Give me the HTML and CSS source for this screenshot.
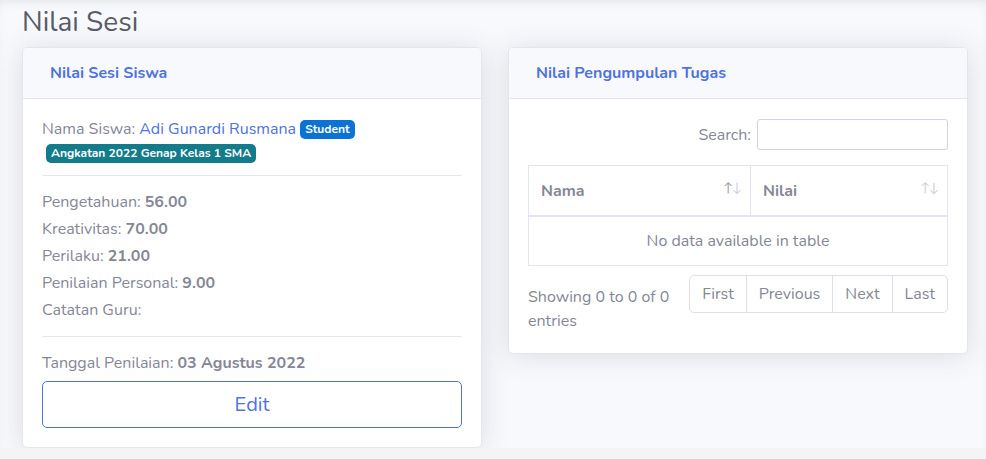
FILE: index.html
```html
<!DOCTYPE html>
<html>
<head>
<meta charset="utf-8">
<link rel="stylesheet" href="styles.css">
</head>
<body>
<div class="page">
  <h1 class="page-title">Nilai Sesi</h1>
  <div class="grid">
    <div class="card">
      <div class="card-header">Nilai Sesi Siswa</div>
      <div class="card-body">
        <div class="student">Nama Siswa: <span class="link">Adi Gunardi Rusmana</span> <span class="badge badge-blue">Student</span> <span class="badge badge-teal">Angkatan 2022 Genap Kelas 1 SMA</span></div>
        <hr class="divider divider-top">
        <div class="scores">
          <div>Pengetahuan: <b>56.00</b></div>
          <div>Kreativitas: <b>70.00</b></div>
          <div>Perilaku: <b>21.00</b></div>
          <div>Penilaian Personal: <b>9.00</b></div>
          <div>Catatan Guru:</div>
        </div>
        <hr class="divider divider-bottom">
        <div class="date">Tanggal Penilaian: <b>03 Agustus 2022</b></div>
        <button class="btn-edit">Edit</button>
      </div>
    </div>
    <div class="card card-short">
      <div class="card-header">Nilai Pengumpulan Tugas</div>
      <div class="card-body">
        <div class="search-row"><label>Search:</label><input class="search-input" type="search"></div>
        <table class="table">
          <thead>
            <tr><th class="col-name"><span>Nama</span><span class="sort"><span class="up">↑</span><span class="down">↓</span></span></th><th><span>Nilai</span><span class="sort dim"><span class="up">↑</span><span class="down">↓</span></span></th></tr>
          </thead>
          <tbody>
            <tr><td colspan="2" class="empty">No data available in table</td></tr>
          </tbody>
        </table>
        <div class="footer-row">
          <div class="info">Showing 0 to 0 of 0 entries</div>
          <div class="pagination">
            <span class="page-link">First</span>
            <span class="page-link">Previous</span>
            <span class="page-link">Next</span>
            <span class="page-link">Last</span>
          </div>
        </div>
      </div>
    </div>
  </div>
</div>
<div class="bottom-strip"></div>
</body>
</html>
```

FILE: styles.css
```css
html, body {
  margin: 0;
  padding: 0;
}
body {
  background: #f4f4f6;
  font-family: "Nunito", "Lato", "Open Sans", sans-serif;
  font-size: 16px;
  line-height: 24px;
  color: #858796;
}
.page {
  height: 448px;
  overflow: hidden;
  background: #f8f9fc;
  box-shadow: inset 0 6px 14px -8px rgba(58, 59, 69, 0.18);
  padding: 0 18px 0 22px;
  box-sizing: border-box;
}
.page-title {
  margin: 0;
  padding-top: 5px;
  height: 47px;
  box-sizing: border-box;
  font-size: 28px;
  line-height: 34px;
  font-weight: 400;
  color: #5a5c69;
}
.grid {
  display: flex;
  gap: 26px;
  align-items: flex-start;
}
.card {
  width: 460px;
  box-sizing: border-box;
  background: #fff;
  border: 1px solid #e3e6f0;
  border-radius: 5px;
  box-shadow: 0 2px 28px 0 rgba(58, 59, 69, 0.15);
  overflow: hidden;
}
.card-header {
  background: #f8f9fc;
  border-bottom: 1px solid #e3e6f0;
  height: 51px;
  box-sizing: border-box;
  padding: 13px 27px;
  font-weight: 700;
  color: #4e73df;
}
.card-body {
  padding: 18px 19px 19px 19px;
}
.link {
  color: #4e73df;
}
.badge {
  display: inline-block;
  font-size: 12px;
  font-weight: 700;
  line-height: 1;
  padding: 3px 5px 4px;
  border-radius: 5px;
  color: #fff;
  vertical-align: 1px;
}
.badge-blue {
  background: #0b72d6;
}
.badge-teal {
  background: #137b8a;
  margin-left: 4px;
}
.divider {
  border: 0;
  border-top: 1px solid #e3e6f0;
}
.divider-top {
  margin: 10px 0 14px 0;
}
.divider-bottom {
  margin: 14px 0 14px 0;
}
.scores {
  display: flex;
  flex-direction: column;
  gap: 3px;
}
.scores b, .date b {
  font-weight: 700;
}
.date {
  margin-bottom: 6px;
}
.btn-edit {
  display: block;
  width: 100%;
  height: 47px;
  background: #fff;
  border: 1px solid #4e73df;
  border-radius: 5px;
  color: #4e73df;
  font-family: inherit;
  font-size: 20px;
  line-height: 30px;
  padding: 0;
}
.card-short .card-body {
  padding: 20px 19px 20px 19px;
}
.search-row {
  display: flex;
  justify-content: flex-end;
  align-items: center;
  gap: 6px;
}
.search-input {
  width: 191px;
  height: 31px;
  box-sizing: border-box;
  border: 1px solid #d1d3e2;
  border-radius: 3px;
  margin: 0;
  padding: 0 8px;
}
.table {
  width: 100%;
  border-collapse: collapse;
  margin-top: 15px;
  margin-bottom: 9px;
}
.table th, .table td {
  border: 1px solid #e3e6f0;
  padding: 12px;
}
.table th {
  border-bottom-width: 2px;
  text-align: left;
  font-weight: 700;
  position: relative;
  padding-top: 13px;
}
.table th.col-name {
  width: 197px;
}
.sort {
  position: absolute;
  right: 9px;
  top: 10px;
  font-size: 13px;
  font-weight: 400;
  letter-spacing: -1px;
}
.sort .up { color: #9ea0ab; }
.sort .down { color: #d0d1d8; }
.sort.dim .up { color: #d0d1d8; }
.empty {
  text-align: center;
}
.footer-row {
  display: flex;
  justify-content: space-between;
  align-items: flex-start;
}
.info {
  width: 160px;
  padding-top: 10px;
}
.pagination {
  display: flex;
  border: 1px solid #dddfeb;
  border-radius: 5px;
  overflow: hidden;
}
.page-link {
  padding: 6px 12px;
  border-left: 1px solid #dddfeb;
  color: #858796;
}
.page-link:first-child {
  border-left: 0;
}
.bottom-strip {
  height: 11px;
}
```
